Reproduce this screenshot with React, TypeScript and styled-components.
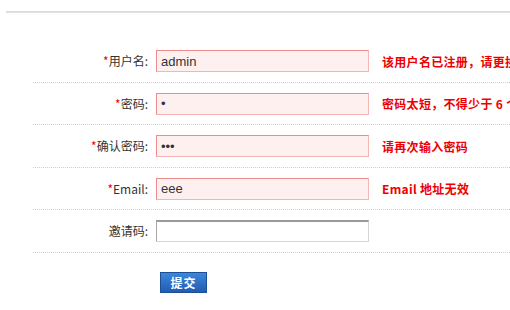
import React from "react";
import styled, { createGlobalStyle } from "styled-components";

const GlobalStyle = createGlobalStyle`
  html, body {
    margin: 0;
    padding: 0;
    background: #fff;
    overflow: hidden;
  }
  body {
    font-family: "Noto Sans CJK SC", "DejaVu Sans", sans-serif;
    font-size: 12px;
    color: #333;
  }
`;

const Page = styled.div`
  width: 510px;
  height: 310px;
  overflow: hidden;
`;

const TopRule = styled.div`
  margin: 11px 0 0 6px;
  height: 2px;
  background: linear-gradient(to bottom, #d4d4d4, #e9e9e9);
`;

const Form = styled.form`
  margin: 27px 0 0 33px;
`;

const Row = styled.div`
  display: flex;
  align-items: center;
  height: 22px;
  padding: 10px 0 9.5px;
  border-bottom: 1px dotted #cfcfcf;
  white-space: nowrap;
`;

const Label = styled.label`
  width: 115px;
  text-align: right;
  color: #333;
  font-size: 12px;
  line-height: 22px;
  flex-shrink: 0;
`;

const Star = styled.span`
  color: #e00;
`;

interface IInput {
  $error?: boolean;
}
const Input = styled.input<IInput>`
  box-sizing: border-box;
  width: 213px;
  height: 22px;
  margin: 0 0 0 8px;
  padding: 0 4px;
  font-family: "Liberation Sans", "Noto Sans CJK SC", sans-serif;
  font-size: 13px;
  color: #333;
  outline: none;
  flex-shrink: 0;
  ${(p) =>
    p.$error
      ? `
    background: #fff0f0;
    border: 1px solid #f5b5b5;
    border-top-color: #ee8c8c;
    border-left-color: #ee8c8c;
  `
      : `
    background: #fff;
    border: 1px solid #d6d6d6;
    border-top: 2px solid #9a9a9a;
    border-left-color: #a8a8a8;
  `}
`;

const ErrorText = styled.span`
  margin-left: 13px;
  color: #e00;
  font-weight: bold;
  font-size: 12px;
  letter-spacing: 0.3px;
`;

const Actions = styled.div`
  padding: 19px 0 0 127px;
`;

const Submit = styled.button`
  width: 47px;
  height: 21px;
  padding: 0;
  border: 1px solid #1b4f96;
  background: linear-gradient(to bottom, #3f86d8, #1f5db4);
  color: #fff;
  font-family: "Noto Sans CJK SC", sans-serif;
  font-weight: bold;
  font-size: 12px;
  line-height: 19px;
  letter-spacing: 1px;
  cursor: pointer;
`;

interface IField {
  label: string;
  required?: boolean;
  type?: string;
  value: string;
  error?: string;
}

const fields: IField[] = [
  { label: "用户名:", required: true, value: "admin", error: "该用户名已注册，请更换" },
  { label: "密码:", required: true, type: "password", value: "a", error: "密码太短，不得少于 6 个字符" },
  { label: "确认密码:", required: true, type: "password", value: "aaa", error: "请再次输入密码" },
  { label: "Email:", required: true, value: "eee", error: "Email 地址无效" },
  { label: "邀请码:", value: "" },
];

function App() {
  return (
    <Page>
      <GlobalStyle />
      <TopRule />
      <Form onSubmit={(e) => e.preventDefault()}>
        {fields.map((f) => (
          <Row key={f.label}>
            <Label>
              {f.required && <Star>*</Star>}
              {f.label}
            </Label>
            <Input
              type={f.type || "text"}
              defaultValue={f.value}
              $error={!!f.error}
            />
            {f.error && <ErrorText>{f.error}</ErrorText>}
          </Row>
        ))}
        <Actions>
          <Submit type="submit">提交</Submit>
        </Actions>
      </Form>
    </Page>
  );
}

export default App;
